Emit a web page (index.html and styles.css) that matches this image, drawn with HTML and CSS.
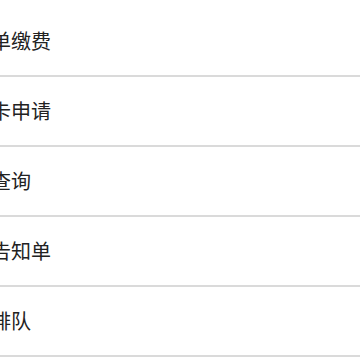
FILE: index.html
```html
<!DOCTYPE html>
<html lang="zh-CN">
<head>
    <meta charset="UTF-8">
    <meta name="viewport" content="width=device-width, initial-scale=1.0">
    <title>服务列表</title>
    <link rel="stylesheet" href="styles.css">
</head>
<body>
    <ul class="menu-list">
        <li class="menu-item"><span class="menu-text">单缴费</span></li>
        <li class="menu-item"><span class="menu-text">卡申请</span></li>
        <li class="menu-item"><span class="menu-text">查询</span></li>
        <li class="menu-item"><span class="menu-text">告知单</span></li>
        <li class="menu-item"><span class="menu-text">排队</span></li>
    </ul>
</body>
</html>
```

FILE: styles.css
```css
html, body {
    margin: 0;
    padding: 0;
    background: #ffffff;
}

body {
    font-family: "Noto Sans CJK SC", "Noto Sans", sans-serif;
    color: #222222;
    overflow: hidden;
}

.menu-list {
    list-style: none;
    margin: 0;
    padding: 7px 0 0 0;
}

.menu-item {
    height: 68px;
    display: flex;
    align-items: center;
    border-bottom: 2px solid #dadada;
}

.menu-text {
    font-size: 20px;
    line-height: 1;
    margin-left: -9px;
}
```
